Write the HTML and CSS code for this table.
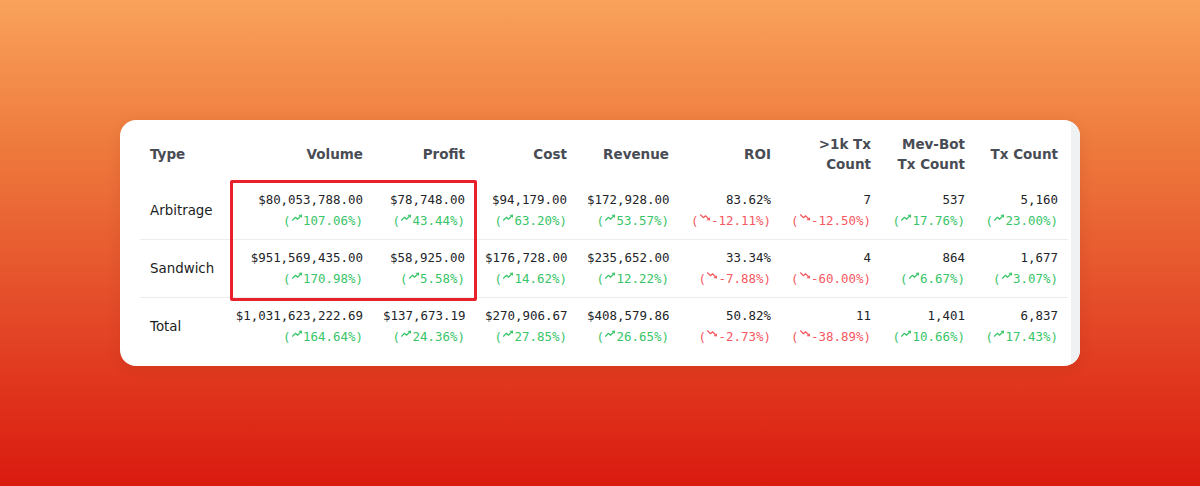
FILE: index.html
```html
<!DOCTYPE html>
<html>
<head>
<meta charset="utf-8">
<link rel="stylesheet" href="styles.css">
</head>
<body>
<svg class="defs" width="0" height="0">
  <defs>
    <symbol id="up" viewBox="2 5 20 13"><polyline points="3 17 9 11 13 15 21 7" fill="none" stroke="currentColor" stroke-width="2.3" stroke-linecap="round" stroke-linejoin="round"/><polyline points="16.5 7 21 7 21 10.5" fill="none" stroke="currentColor" stroke-width="2.3" stroke-linecap="round" stroke-linejoin="round"/></symbol>
    <symbol id="down" viewBox="2 6 20 13"><polyline points="3 7 9 13 13 9 21 17" fill="none" stroke="currentColor" stroke-width="2.3" stroke-linecap="round" stroke-linejoin="round"/><polyline points="21 13.5 21 17 16.5 17" fill="none" stroke="currentColor" stroke-width="2.3" stroke-linecap="round" stroke-linejoin="round"/></symbol>
  </defs>
</svg>
<div class="card">
  <div class="scroll">
    <table class="stats">
      <colgroup>
        <col class="c-type"><col class="c-vol"><col class="c-std"><col class="c-std"><col class="c-std"><col class="c-std"><col class="c-1k"><col class="c-mev"><col class="c-tx">
      </colgroup>
      <thead>
        <tr>
          <th class="left">Type</th>
          <th>Volume</th>
          <th>Profit</th>
          <th>Cost</th>
          <th>Revenue</th>
          <th>ROI</th>
          <th>&gt;1k Tx<br>Count</th>
          <th>Mev-Bot<br>Tx Count</th>
          <th>Tx Count</th>
        </tr>
      </thead>
      <tbody>
        <tr>
          <td class="type">Arbitrage</td>
          <td><div class="val">$80,053,788.00</div><div class="chg up">(<svg class="ic"><use href="#up"/></svg>107.06%)</div></td>
          <td><div class="val">$78,748.00</div><div class="chg up">(<svg class="ic"><use href="#up"/></svg>43.44%)</div></td>
          <td><div class="val">$94,179.00</div><div class="chg up">(<svg class="ic"><use href="#up"/></svg>63.20%)</div></td>
          <td><div class="val">$172,928.00</div><div class="chg up">(<svg class="ic"><use href="#up"/></svg>53.57%)</div></td>
          <td><div class="val">83.62%</div><div class="chg down">(<svg class="ic"><use href="#down"/></svg>-12.11%)</div></td>
          <td><div class="val">7</div><div class="chg down">(<svg class="ic"><use href="#down"/></svg>-12.50%)</div></td>
          <td><div class="val">537</div><div class="chg up">(<svg class="ic"><use href="#up"/></svg>17.76%)</div></td>
          <td><div class="val">5,160</div><div class="chg up">(<svg class="ic"><use href="#up"/></svg>23.00%)</div></td>
        </tr>
        <tr>
          <td class="type">Sandwich</td>
          <td><div class="val">$951,569,435.00</div><div class="chg up">(<svg class="ic"><use href="#up"/></svg>170.98%)</div></td>
          <td><div class="val">$58,925.00</div><div class="chg up">(<svg class="ic"><use href="#up"/></svg>5.58%)</div></td>
          <td><div class="val">$176,728.00</div><div class="chg up">(<svg class="ic"><use href="#up"/></svg>14.62%)</div></td>
          <td><div class="val">$235,652.00</div><div class="chg up">(<svg class="ic"><use href="#up"/></svg>12.22%)</div></td>
          <td><div class="val">33.34%</div><div class="chg down">(<svg class="ic"><use href="#down"/></svg>-7.88%)</div></td>
          <td><div class="val">4</div><div class="chg down">(<svg class="ic"><use href="#down"/></svg>-60.00%)</div></td>
          <td><div class="val">864</div><div class="chg up">(<svg class="ic"><use href="#up"/></svg>6.67%)</div></td>
          <td><div class="val">1,677</div><div class="chg up">(<svg class="ic"><use href="#up"/></svg>3.07%)</div></td>
        </tr>
        <tr>
          <td class="type">Total</td>
          <td><div class="val">$1,031,623,222.69</div><div class="chg up">(<svg class="ic"><use href="#up"/></svg>164.64%)</div></td>
          <td><div class="val">$137,673.19</div><div class="chg up">(<svg class="ic"><use href="#up"/></svg>24.36%)</div></td>
          <td><div class="val">$270,906.67</div><div class="chg up">(<svg class="ic"><use href="#up"/></svg>27.85%)</div></td>
          <td><div class="val">$408,579.86</div><div class="chg up">(<svg class="ic"><use href="#up"/></svg>26.65%)</div></td>
          <td><div class="val">50.82%</div><div class="chg down">(<svg class="ic"><use href="#down"/></svg>-2.73%)</div></td>
          <td><div class="val">11</div><div class="chg down">(<svg class="ic"><use href="#down"/></svg>-38.89%)</div></td>
          <td><div class="val">1,401</div><div class="chg up">(<svg class="ic"><use href="#up"/></svg>10.66%)</div></td>
          <td><div class="val">6,837</div><div class="chg up">(<svg class="ic"><use href="#up"/></svg>17.43%)</div></td>
        </tr>
      </tbody>
    </table>
    <div class="highlight"></div>
  </div>
  <div class="track"></div>
</div>
</body>
</html>
```
FILE: styles.css
```css
html, body {
  margin: 0;
  padding: 0;
}
body {
  width: 1200px;
  height: 486px;
  display: flex;
  align-items: center;
  justify-content: center;
  background: linear-gradient(to bottom, #f9a25b 0%, #ee7a3d 30%, #e5502b 60%, #da1a0f 100%);
  font-family: "DejaVu Sans", Verdana, sans-serif;
  overflow: hidden;
}
.defs {
  position: absolute;
  width: 0;
  height: 0;
}
.card {
  width: 960px;
  height: 246px;
  box-sizing: border-box;
  background: #ffffff;
  border-radius: 16px;
  overflow: hidden;
  display: flex;
  padding-left: 20px;
  box-shadow: 0 4px 14px rgba(120, 30, 0, 0.12);
}
.scroll {
  position: relative;
  width: 928px;
  padding-top: 14px;
}
.track {
  width: 9px;
  margin-left: 3px;
  background: #f0f1f3;
}
.stats {
  border-collapse: collapse;
  table-layout: fixed;
  width: 928px;
}
.c-type { width: 85px; }
.c-vol { width: 148px; }
.c-std { width: 102px; }
.c-1k { width: 100px; }
.c-mev { width: 94px; }
.c-tx { width: 93px; }
th {
  font-size: 13.5px;
  font-weight: bold;
  color: #484c54;
  line-height: 20px;
  text-align: right;
  padding: 0 10px 7px;
  vertical-align: middle;
  white-space: nowrap;
}
th.left {
  text-align: left;
}
td {
  padding: 8px 10px;
  text-align: right;
  vertical-align: middle;
  white-space: nowrap;
}
tbody tr + tr td {
  border-top: 1px solid #ececec;
  padding-top: 7px;
}
td.type {
  text-align: left;
  font-size: 13.4px;
  color: #1a1d22;
}
.val, .chg {
  font-family: "DejaVu Sans Mono", monospace;
  font-size: 12.45px;
  line-height: 21px;
}
.val {
  color: #222428;
}
.chg.up {
  color: #38c468;
}
.chg.down {
  color: #f5585f;
}
.ic {
  width: 10px;
  height: 7px;
  margin: 0 1.5px 0 1px;
  vertical-align: 4px;
}
.highlight {
  position: absolute;
  left: 90px;
  top: 60px;
  width: 247px;
  height: 121px;
  box-sizing: border-box;
  border: 3px solid #e8202b;
  border-radius: 2px;
}
```
